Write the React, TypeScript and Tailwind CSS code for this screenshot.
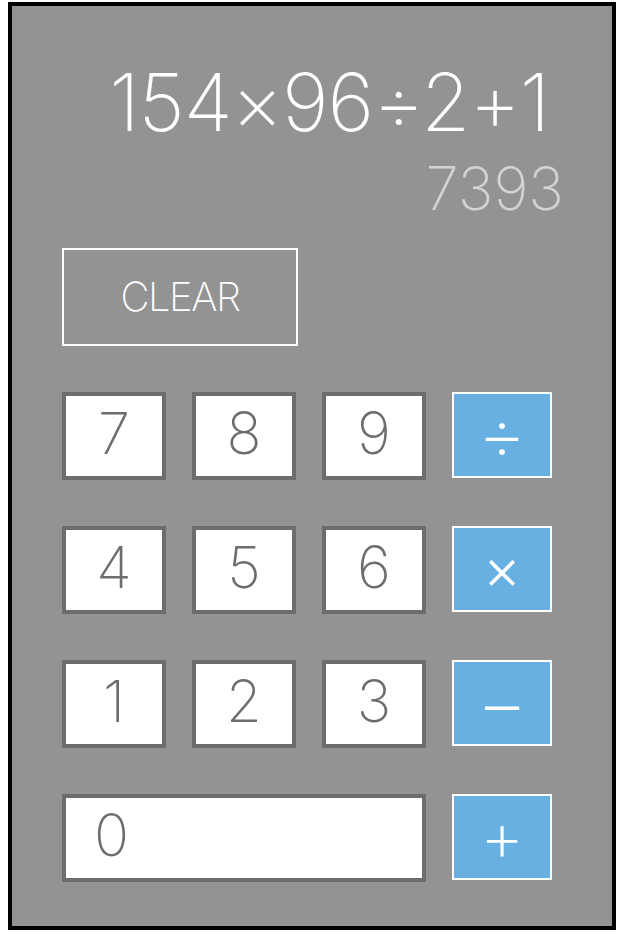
const digitRows = [
  ['7', '8', '9'],
  ['4', '5', '6'],
  ['1', '2', '3'],
];

// each symbol needs its own size to match the reference glyph widths
const operators = [
  { label: '÷', cls: 'text-[76px] font-extralight pb-[4px]' },
  { label: '×', cls: 'text-[58px] font-light pb-[2px]' },
  { label: '−', cls: 'text-[80px] font-extralight pb-[2px]' },
  { label: '+', cls: 'text-[70px] font-extralight pb-[2px]' },
];

function DigitKey({ label }: { label: string }) {
  return (
    <button className="flex h-[88px] w-[104px] items-center justify-center border-4 border-[#6d6d6d] bg-white pb-[6px] text-[58px] leading-none font-extralight text-[#6d6d6d]">
      {label}
    </button>
  );
}

function OpKey({ label, cls }: { label: string; cls: string }) {
  return (
    <button className={`flex h-[86px] w-[100px] items-center justify-center border-2 border-white bg-[#67b0e1] leading-none text-white ${cls}`}>
      {label}
    </button>
  );
}

export default function App() {
  return (
    <div className="bg-white pt-[2px] pl-[8px]" style={{ fontFamily: 'Inter, "Helvetica Neue", sans-serif' }}>
      <div className="flex h-[928px] w-[608px] flex-col border-4 border-black bg-[#939393] px-[50px]">
        <div className="mt-[56px] pr-[13px] text-right text-[80px] leading-none font-extralight tracking-[-1.1px] text-white">
          154×96÷2+1
        </div>
        <div className="mt-[16px] -mr-[2px] text-right text-[60px] leading-none font-extralight text-[#d3d3d3]">
          7393
        </div>
        <button className="mt-[30px] flex h-[98px] w-[236px] items-center justify-center border-2 border-white text-[40px] leading-none font-extralight tracking-[-1.5px] text-white">
          CLEAR
        </button>
        <div className="mt-[46px] grid grid-cols-[104px_104px_104px_100px] items-start gap-x-[26px] gap-y-[46px]">
          {digitRows.map((row, i) => (
            <>
              {row.map((d) => (
                <DigitKey key={d} label={d} />
              ))}
              <OpKey key={operators[i].label} label={operators[i].label} cls={operators[i].cls} />
            </>
          ))}
          <button className="col-span-3 flex h-[88px] items-center justify-start border-4 border-[#6d6d6d] bg-white pb-[6px] pl-[28px] text-[58px] leading-none font-extralight text-[#6d6d6d]">
            0
          </button>
          <OpKey label={operators[3].label} cls={operators[3].cls} />
        </div>
      </div>
    </div>
  );
}
